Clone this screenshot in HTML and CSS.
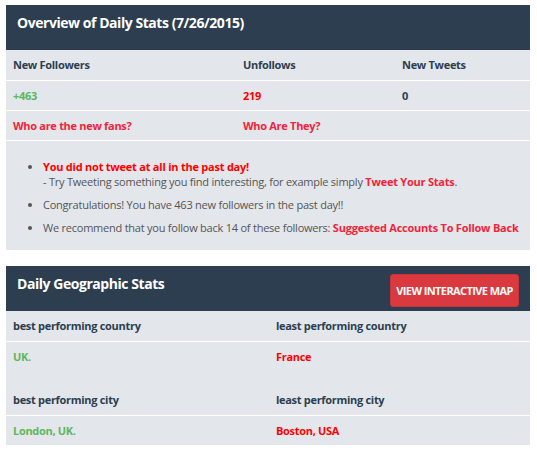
FILE: index.html
```html
<!DOCTYPE html>
<html>
<head>
<meta charset="utf-8">
<link rel="stylesheet" href="styles.css">
</head>
<body>
<section class="panel">
  <div class="panel-head"><h2>Overview of Daily Stats (7/26/2015)</h2></div>
  <div class="grid3 row head">
    <div>New Followers</div><div>Unfollows</div><div>New Tweets</div>
  </div>
  <div class="grid3 row">
    <div class="green">+463</div><div class="red">219</div><div class="dark">0</div>
  </div>
  <div class="grid3 row">
    <div><a class="link">Who are the new fans?</a></div><div><a class="link">Who Are They?</a></div><div></div>
  </div>
  <ul class="notes">
    <li><span class="red">You did not tweet at all in the past day!</span><br>- Try Tweeting something you find interesting, for example simply <a class="link">Tweet Your Stats</a>.</li>
    <li>Congratulations! You have 463 new followers in the past day!!</li>
    <li>We recommend that you follow back 14 of these followers: <a class="link">Suggested Accounts To Follow Back</a></li>
  </ul>
</section>
<section class="panel geo">
  <div class="panel-head"><h2>Daily Geographic Stats</h2><button class="btn">VIEW INTERACTIVE MAP</button></div>
  <div class="grid2 row head"><div>best performing country</div><div>least performing country</div></div>
  <div class="grid2 row"><div class="green">UK.</div><div class="red">France</div></div>
  <div class="spacer"></div>
  <div class="grid2 row head"><div>best performing city</div><div>least performing city</div></div>
  <div class="grid2 row"><div class="green">London, UK.</div><div class="red">Boston, USA</div></div>
</section>
</body>
</html>
```
FILE: styles.css
```css
body {
  margin: 0;
  padding: 5px 7px 0 6px;
  font-family: "Open Sans", "Liberation Sans", sans-serif;
  background: #fff;
}
.panel {
  background: #e3e6ea;
  width: 524px;
}
.geo { margin-top: 16px; }
.panel-head {
  background: #2c3e50;
  height: 45px;
  box-sizing: border-box;
  padding: 8px 11px 0 11px;
  display: flex;
  align-items: flex-start;
}
.panel-head h2 {
  margin: 0;
  color: #fff;
  font-size: 14px;
  line-height: 20px;
  font-weight: 700;
  letter-spacing: -0.45px;
  flex: 1;
}
.btn {
  background: #da3940;
  border: 1px solid #c8323a;
  border-radius: 3px;
  color: #fff;
  font-family: inherit;
  font-weight: 700;
  font-size: 11px;
  letter-spacing: -0.6px;
  width: 129px;
  height: 33px;
  padding: 0;
  margin: 0;
}
.row {
  height: 30px;
  align-items: center;
  font-size: 11px;
  font-weight: 700;
  letter-spacing: -0.3px;
  border-top: 1px solid #fff;
  box-sizing: border-box;
  padding-bottom: 1px;
}
.row.head { color: #2c3e50; border-top: none; }
.row > div { padding-left: 7px; }
.grid3 { display: grid; grid-template-columns: 230px 159px 1fr; }
.grid2 { display: grid; grid-template-columns: 263px 1fr; }
.spacer { height: 14px; }
.green { color: #5cb85c; }
.red { color: #ff0000; }
.dark { color: #2c3e50; }
.link { color: #f0243b; text-decoration: none; font-weight: 700; }
.notes {
  margin: 0;
  border-top: 1px solid #fff;
  padding: 18px 0 0 37px;
  color: #555;
  font-size: 11px;
  letter-spacing: -0.23px;
  line-height: 15px;
  height: 110px;
  box-sizing: border-box;
}
.notes li { margin-bottom: 8px; }
.notes li::marker { color: #555; }
.notes .red { font-weight: 700; }
```
